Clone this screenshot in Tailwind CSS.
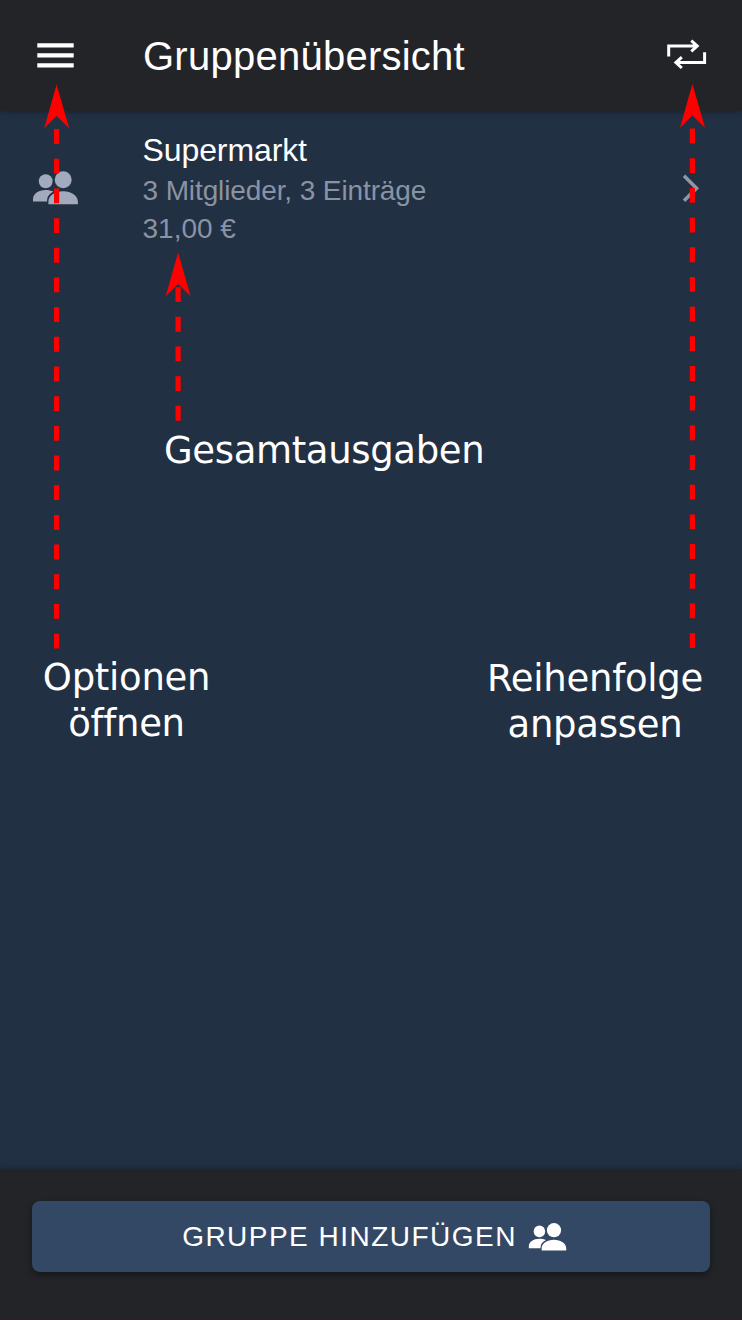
<!DOCTYPE html>
<html lang="de">
<head>
<meta charset="utf-8">
<title>Gruppenübersicht</title>
<script src="https://cdn.jsdelivr.net/npm/@tailwindcss/browser@4"></script>
</head>
<body class="bg-[#223043]">
<div class="relative flex h-[1320px] w-[742px] flex-col overflow-hidden bg-[#223043] font-['Liberation_Sans',sans-serif] text-white">
  <header class="flex h-[111px] shrink-0 items-center bg-[#232428] shadow-[0_1px_6px_rgba(0,0,0,0.3)]">
    <svg class="ml-8 h-12 w-12" viewBox="32 32 48 48" fill="#fff"><path d="M37.3 43.2h36.4v4.3H37.3zM37.3 53.2h36.4v4.3H37.3zM37.3 63.2h36.4v4.3H37.3z"/></svg>
    <h1 class="ml-[63px] flex-1 text-[40px] leading-[48px] tracking-[0.25px]">Gruppenübersicht</h1>
    <svg class="mr-8 h-12 w-12" viewBox="662 32 48 48" fill="none" stroke="#fff" stroke-width="3"><path d="M668.7 56.5V46H697M691.3 40.7l5.9 5.3-5.9 5.4M704.6 52.2v10.4H676M681.8 57.2l-5.9 5.4 5.9 5.4"/></svg>
  </header>

  <main class="flex-1">
    <div class="flex h-[154px] items-center">
      <svg class="ml-8 h-12 w-12" viewBox="32 164 48 48" fill="#a2abbd"><ellipse cx="45.7" cy="181.3" rx="6.9" ry="7"/><circle cx="63.2" cy="179.8" r="8.5"/><path d="M33 201.5v-2.3c0-5.3 5.5-9.2 12.7-9.2 3 0 5.6.5 7.8 1.6-4 2-6.4 5-6.4 8.4v1.5zM48.4 204.3v-2.6c0-6 6.4-10.4 14.7-10.4s14.8 4.4 14.8 10.4v2.6z"/></svg>
      <div class="ml-[62.5px] flex-1">
        <h2 class="pt-0.5 text-[32px] leading-[38px] tracking-[-0.1px]">Supermarkt</h2>
        <p class="pt-[3px] text-[28px] leading-[38px] tracking-[-0.11px] text-[#8a93a3]">3 Mitglieder, 3 Einträge</p>
        <p class="text-[28px] leading-[38px] text-[#8a93a3]">31,00 €</p>
      </div>
      <svg class="mr-8 h-10 w-10" viewBox="670 168 40 40" fill="none" stroke="#9096a2" stroke-width="3.6"><path d="M684 175.7 696.5 188.2 684 200.7"/></svg>
    </div>
  </main>

  <footer class="h-[151px] shrink-0 border-b border-[#2c1c25] bg-[#232428] px-8 pt-8 shadow-[0_-1px_6px_rgba(0,0,0,0.25)]">
    <button class="flex h-[71px] w-[678px] items-center justify-center rounded-lg bg-[#334864] pl-2 shadow-[0_3px_6px_rgba(0,0,0,0.4)]">
      <span class="text-[28px] tracking-[1.48px]">GRUPPE HINZUFÜGEN</span>
      <svg class="ml-[11px] h-10 w-10" viewBox="32 164 48 48" fill="#fff"><ellipse cx="45.7" cy="181.3" rx="6.9" ry="7"/><circle cx="63.2" cy="179.8" r="8.5"/><path d="M33 201.5v-2.3c0-5.3 5.5-9.2 12.7-9.2 3 0 5.6.5 7.8 1.6-4 2-6.4 5-6.4 8.4v1.5zM48.4 204.3v-2.6c0-6 6.4-10.4 14.7-10.4s14.8 4.4 14.8 10.4v2.6z"/></svg>
    </button>
  </footer>

  <!-- Annotations over the screen -->
  <svg class="absolute inset-0 h-[1320px] w-[742px]" viewBox="0 0 742 1320">
    <g fill="none" stroke="#f00" stroke-width="5.2" stroke-dasharray="14.84">
      <path d="M56.6 648.5V128"/><path d="M692.4 648V128"/><path d="M178.1 420.7V286"/>
    </g>
    <path fill="#f00" d="M56.6 84.5 69.2 128.2 56.6 116 44.2 128.2zM692.4 84 705 127.7 692.4 115.5 680 127.7zM178.1 252.5 190.6 296.2 178.1 284 165.7 296.2z"/>
  </svg>
  <div class="absolute left-[164px] top-[428px] whitespace-nowrap font-['DejaVu_Sans',sans-serif] text-[37px] leading-[46px] tracking-[-0.35px]">Gesamtausgaben</div>
  <div class="absolute left-[26px] top-[655px] w-[201px] text-center font-['DejaVu_Sans',sans-serif] text-[37px] leading-[46px] tracking-[-0.3px]">Optionen<br>öffnen</div>
  <div class="absolute left-[475px] top-[656px] w-[240px] text-center font-['DejaVu_Sans',sans-serif] text-[37px] leading-[46px] tracking-[-0.25px]">Reihenfolge<br>anpassen</div>
</div>
</body>
</html>
